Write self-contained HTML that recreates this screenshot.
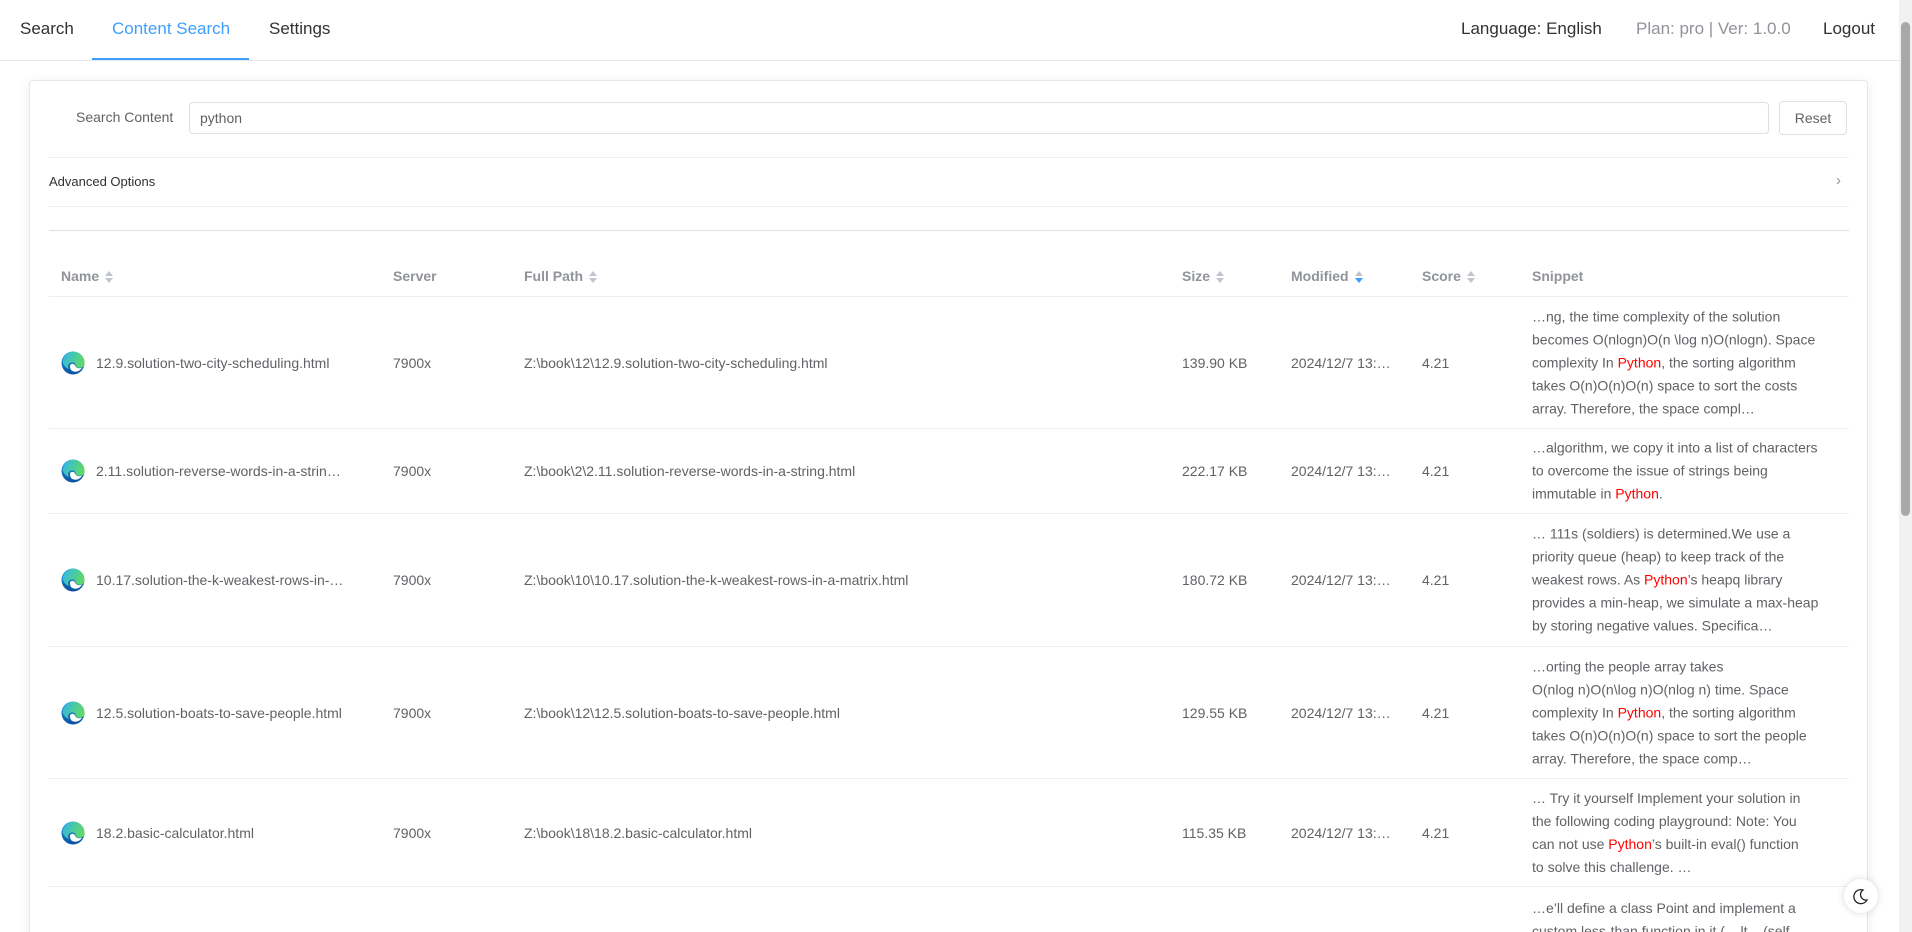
<!DOCTYPE html>
<html><head><meta charset="utf-8"><style>
*{box-sizing:border-box;margin:0;padding:0}
html,body{width:1912px;height:932px;overflow:hidden}
body{background:#fff;font-family:"Liberation Sans","Noto Sans CJK SC",sans-serif;color:#303133;position:relative}
.nav{position:absolute;left:0;top:0;width:1899px;height:61px;border-bottom:1px solid #e4e7ed}
.nav span{position:absolute;top:19px;font-size:17px;color:#303133}
.ul{position:absolute;left:92px;top:58px;width:157px;height:2px;background:#409eff}
.sb{position:absolute;left:1899px;top:0;width:13px;height:932px;background:#f1f1f1}
.sb div{position:absolute;left:2px;top:22px;width:9px;height:494px;background:#a8a8a8;border-radius:5px}
.card{position:absolute;left:29px;top:80px;width:1839px;height:860px;border:1px solid #e4e7ed;border-radius:4px;box-shadow:0 2px 12px rgba(0,0,0,.08);background:#fff}
.abs{position:absolute}
.hr{position:absolute;left:49px;width:1800px;height:1px;background:#ebeef5}
.th{position:absolute;top:268px;font-size:14px;font-weight:bold;color:#909399}
.arr{display:inline-block;vertical-align:middle;margin-left:6px;width:8px;height:12px;position:relative}
.arr:before{content:"";position:absolute;left:0;top:0;border:4px solid transparent;border-bottom:5px solid #c0c4cc;border-top:0}
.arr:after{content:"";position:absolute;left:0;top:7px;border:4px solid transparent;border-top:5px solid #c0c4cc;border-bottom:0}
.arr.blue:after{border-top-color:#409eff}
.row{position:absolute;left:49px;width:1800px;border-bottom:1px solid #ebeef5;font-size:14px;color:#606266}
.row .c{position:absolute;top:50%;transform:translateY(-50%);white-space:nowrap}
.sn{position:absolute;left:1483px;top:50%;transform:translateY(-50%);width:320px;line-height:23px;font-size:14px;color:#606266;white-space:nowrap}
.r{color:#f00}
.ic{position:absolute;left:12px;top:50%;margin-top:-12px;width:24px;height:24px}
</style></head><body>
<svg width="0" height="0" style="position:absolute"><defs>
<linearGradient id="g" x1="0" y1="0" x2="0" y2="1"><stop offset="0" stop-color="#1e9be0"/><stop offset="1" stop-color="#0c4f9e"/></linearGradient>
<linearGradient id="g2" x1="0" y1="0" x2="1" y2="0.3"><stop offset="0" stop-color="#2fb6ee"/><stop offset="1" stop-color="#5fd86a"/></linearGradient>
<symbol id="edge" viewBox="0 0 24 24"><circle cx="12" cy="12" r="11.5" fill="url(#g)"/><path d="M1.5 11 A10.5 10.5 0 0 1 23.5 12.5 C23.5 16 20 17.5 16.5 16.5 C13.5 15.5 15.5 12 12 11.5 C7.5 11 6 15 8 18 C5 17 2.5 14.5 1.5 11Z" fill="url(#g2)"/><path d="M9 15 C9 12.5 13 12 14 14.5 C15 17 18 18 21 16.5 C19 20.5 14 22 10.5 19.5 C9.5 18.5 9 17 9 15Z" fill="#fff"/></symbol>
</defs></svg>
<div class="nav">
<span style="left:20px">Search</span>
<span style="left:112px;color:#409eff">Content Search</span>
<span style="left:269px">Settings</span>
<span style="left:1461px">Language: English</span>
<span style="left:1636px;color:#909399">Plan: pro | Ver: 1.0.0</span>
<span style="left:1823px">Logout</span>
<div class="ul"></div>
</div>
<div class="sb"><div></div></div>
<div class="card"></div>

<div class="abs" style="left:76px;top:109px;font-size:14px;color:#606266">Search Content</div>
<div class="abs" style="left:189px;top:102px;width:1580px;height:32px;border:1px solid #dcdfe6;border-radius:4px;padding:0 10px;line-height:30px;font-size:14px;color:#606266">python</div>
<div class="abs" style="left:1779px;top:101px;width:68px;height:34px;border:1px solid #dcdfe6;border-radius:4px;text-align:center;line-height:32px;font-size:14px;color:#606266">Reset</div>
<div class="hr" style="top:157px"></div>
<div class="abs" style="left:49px;top:174px;font-size:13px;color:#303133">Advanced Options</div>
<div class="abs" style="left:1836px;top:172px;font-size:15px;color:#909399">›</div>
<div class="hr" style="top:206px"></div>
<div class="hr" style="top:230px;background:#dcdfe6"></div>

<div class="th" style="left:61px">Name<span class="arr"></span></div>
<div class="th" style="left:393px">Server</div>
<div class="th" style="left:524px">Full Path<span class="arr"></span></div>
<div class="th" style="left:1182px">Size<span class="arr"></span></div>
<div class="th" style="left:1291px">Modified<span class="arr blue"></span></div>
<div class="th" style="left:1422px">Score<span class="arr"></span></div>
<div class="th" style="left:1532px">Snippet</div>
<div class="hr" style="top:296px"></div>

<div class="row" style="top:297px;height:132px">
<svg class="ic"><use href="#edge"/></svg>
<span class="c" style="left:47px">12.9.solution-two-city-scheduling.html</span>
<span class="c" style="left:344px">7900x</span>
<span class="c" style="left:475px">Z:\book\12\12.9.solution-two-city-scheduling.html</span>
<span class="c" style="left:1133px">139.90 KB</span>
<span class="c" style="left:1242px">2024/12/7 13:…</span>
<span class="c" style="left:1373px">4.21</span>
<div class="sn">…ng, the time complexity of the solution<br>becomes O(nlogn)O(n \log n)O(nlogn). Space<br>complexity In <span class="r">Python</span>, the sorting algorithm<br>takes O(n)O(n)O(n) space to sort the costs<br>array. Therefore, the space compl…</div>
</div>
<div class="row" style="top:429px;height:85px">
<svg class="ic"><use href="#edge"/></svg>
<span class="c" style="left:47px">2.11.solution-reverse-words-in-a-strin…</span>
<span class="c" style="left:344px">7900x</span>
<span class="c" style="left:475px">Z:\book\2\2.11.solution-reverse-words-in-a-string.html</span>
<span class="c" style="left:1133px">222.17 KB</span>
<span class="c" style="left:1242px">2024/12/7 13:…</span>
<span class="c" style="left:1373px">4.21</span>
<div class="sn">…algorithm, we copy it into a list of characters<br>to overcome the issue of strings being<br>immutable in <span class="r">Python</span>.</div>
</div>
<div class="row" style="top:514px;height:133px">
<svg class="ic"><use href="#edge"/></svg>
<span class="c" style="left:47px">10.17.solution-the-k-weakest-rows-in-…</span>
<span class="c" style="left:344px">7900x</span>
<span class="c" style="left:475px">Z:\book\10\10.17.solution-the-k-weakest-rows-in-a-matrix.html</span>
<span class="c" style="left:1133px">180.72 KB</span>
<span class="c" style="left:1242px">2024/12/7 13:…</span>
<span class="c" style="left:1373px">4.21</span>
<div class="sn">… 111s (soldiers) is determined.We use a<br>priority queue (heap) to keep track of the<br>weakest rows. As <span class="r">Python</span>’s heapq library<br>provides a min-heap, we simulate a max-heap<br>by storing negative values. Specifica…</div>
</div>
<div class="row" style="top:647px;height:132px">
<svg class="ic"><use href="#edge"/></svg>
<span class="c" style="left:47px">12.5.solution-boats-to-save-people.html</span>
<span class="c" style="left:344px">7900x</span>
<span class="c" style="left:475px">Z:\book\12\12.5.solution-boats-to-save-people.html</span>
<span class="c" style="left:1133px">129.55 KB</span>
<span class="c" style="left:1242px">2024/12/7 13:…</span>
<span class="c" style="left:1373px">4.21</span>
<div class="sn">…orting the people array takes<br>O(nlog n)O(n\log n)O(nlog n) time. Space<br>complexity In <span class="r">Python</span>, the sorting algorithm<br>takes O(n)O(n)O(n) space to sort the people<br>array. Therefore, the space comp…</div>
</div>
<div class="row" style="top:779px;height:108px">
<svg class="ic"><use href="#edge"/></svg>
<span class="c" style="left:47px">18.2.basic-calculator.html</span>
<span class="c" style="left:344px">7900x</span>
<span class="c" style="left:475px">Z:\book\18\18.2.basic-calculator.html</span>
<span class="c" style="left:1133px">115.35 KB</span>
<span class="c" style="left:1242px">2024/12/7 13:…</span>
<span class="c" style="left:1373px">4.21</span>
<div class="sn">… Try it yourself Implement your solution in<br>the following coding playground: Note: You<br>can not use <span class="r">Python</span>’s built-in eval() function<br>to solve this challenge. …</div>
</div>
<div class="abs" style="left:1532px;top:897px;line-height:23px;font-size:14px;color:#606266;white-space:nowrap">…e’ll define a class Point and implement a<br>custom less-than function in it (__lt__(self,</div>

<div class="abs" style="left:1844px;top:879px;width:34px;height:34px;border-radius:50%;background:#fff;box-shadow:0 0 8px rgba(0,0,0,.15)">
<svg width="34" height="34" viewBox="0 0 34 34"><path d="M19 11 A7 7 0 1 0 23 21 A5.5 5.5 0 0 1 19 11Z" fill="none" stroke="#222" stroke-width="1.3"/></svg>
</div>
</body></html>
